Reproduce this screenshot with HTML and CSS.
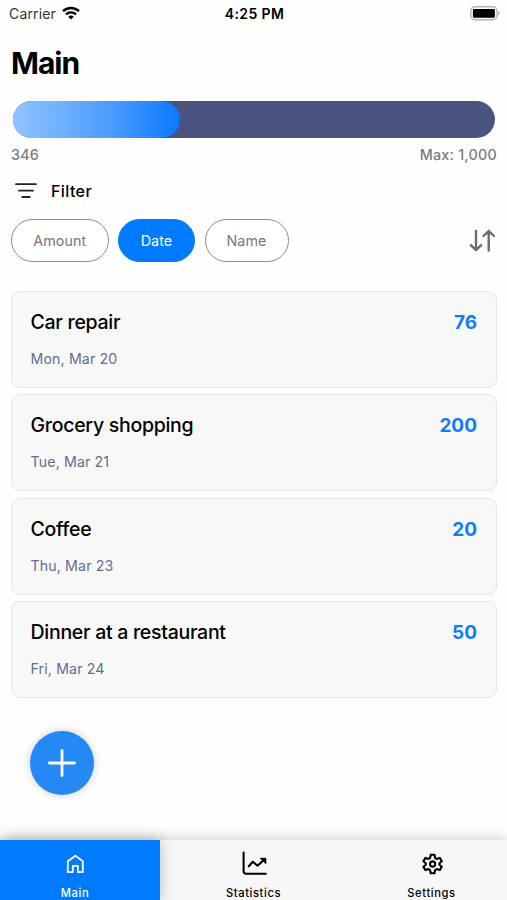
FILE: index.html
```html
<!DOCTYPE html>
<html lang="en">
<head>
  <meta charset="utf-8" />
  <meta name="viewport" content="width=device-width, initial-scale=1" />
  <title>Main</title>
  <link rel="stylesheet" href="styles.css">
</head>
<body>
  <div class="status-bar">
    <div class="carrier">
      <span class="carrier-name">Carrier</span>
      <svg width="18" height="14" viewBox="0 0 18 14" fill="none" stroke="#000" stroke-width="2.4">
        <path d="M1 5.2C5.4.9 12.6.9 17 5.2" />
        <path d="M4 8.4c2.8-2.7 7.2-2.7 10 0" />
        <path d="M9 13.6 6.2 10.7c1.5-1.5 4.1-1.5 5.6 0Z" fill="#000" stroke="none" />
      </svg>
    </div>
    <span class="clock">4:25 PM</span>
    <div class="battery">
      <svg width="31" height="15" viewBox="0 0 31 15">
        <rect x="1.8" y=".8" width="26.2" height="13" rx="4" fill="#fff" stroke="#b5b5b5" stroke-width="1.4" />
        <rect x="3.9" y="2.9" width="22" height="8.8" rx="1" />
        <path d="M29 5.2c2 .6 2 3.6 0 4.2Z" fill="#b5b5b5" />
      </svg>
    </div>
  </div>

  <main>
    <h1>Main</h1>

    <div class="progress">
      <div class="progress-fill" style="width: 34.6%"></div>
    </div>
    <div class="progress-labels">
      <span>346</span>
      <span>Max: 1,000</span>
    </div>

    <div class="filter-title">
      <svg width="22" height="16" viewBox="0 0 22 16" fill="none" stroke="#222" stroke-width="1.8" stroke-linecap="round">
        <path d="M1 1.2h20M4 7.7h14M7.3 14h7.4" />
      </svg>
      <span>Filter</span>
    </div>

    <div class="filters">
      <button class="chip chip-amount">Amount</button>
      <button class="chip chip-date active">Date</button>
      <button class="chip chip-name">Name</button>
      <svg class="sort" width="27" height="24" viewBox="0 0 27 24" fill="none" stroke="#686c78" stroke-width="2.4" stroke-linecap="round" stroke-linejoin="round">
        <path d="M7 2v19M1.8 16.2 7 21.2l5.2-5M19.7 21.5V2M14.5 7l5.2-5 5.2 5" />
      </svg>
    </div>

    <div class="expenses">
      <div class="card">
        <div class="card-row">
          <span class="name">Car repair</span>
          <span class="amount">76</span>
        </div>
        <div class="date">Mon, Mar 20</div>
      </div>
      <div class="card">
        <div class="card-row">
          <span class="name">Grocery shopping</span>
          <span class="amount">200</span>
        </div>
        <div class="date">Tue, Mar 21</div>
      </div>
      <div class="card">
        <div class="card-row">
          <span class="name">Coffee</span>
          <span class="amount">20</span>
        </div>
        <div class="date">Thu, Mar 23</div>
      </div>
      <div class="card">
        <div class="card-row">
          <span class="name">Dinner at a restaurant</span>
          <span class="amount">50</span>
        </div>
        <div class="date">Fri, Mar 24</div>
      </div>
    </div>

    <button class="add">
      <svg width="28" height="28" viewBox="0 0 28 28" fill="none" stroke="#fff" stroke-width="2.8" stroke-linecap="round">
        <path d="M14 1.4v25.2M1.4 14h25.2" />
      </svg>
    </button>
  </main>

  <nav>
    <a class="tab tab-main active">
      <svg width="26" height="26" viewBox="0 0 26 26" fill="none" stroke="#fff" stroke-width="1.8" stroke-linejoin="round">
        <path d="M5.8 10.2 13.4 4.7l7.4 5.5v10.9h-4.9v-6.3h-5.1v6.3h-5Z" />
      </svg>
      <span>Main</span>
    </a>
    <a class="tab tab-statistics">
      <svg width="26" height="26" viewBox="0 0 26 26" fill="none" stroke="#000" stroke-width="2.1" stroke-linecap="round" stroke-linejoin="round">
        <path d="M2.6 1.6v18.8a2.4 2.4 0 0 0 2.4 2.4h19.8M7.8 15.3l4-4.6 4.7 4 6.6-6" />
        <path d="M19.8 7.3h5v5Z" fill="#000" stroke-width="1" />
      </svg>
      <span>Statistics</span>
    </a>
    <a class="tab tab-settings">
      <svg width="26" height="26" viewBox="0 0 26 26" fill="none" stroke="#000" stroke-width="2.1" stroke-linejoin="round">
        <path d="M11.7 3.8h3.8l.5 2.7q.1.6.7.9l.5.3q.5.3 1.1.1l2.6-.9 1.9 3.3-2.1 1.8q-.4.4-.4 1t.4 1l2.1 1.8-1.9 3.3-2.6-.9q-.6-.2-1.1.1l-.5.3q-.6.3-.7.9l-.5 2.7h-3.8l-.5-2.7q-.1-.6-.7-.9l-.5-.3q-.5-.3-1.1-.1l-2.6.9-1.9-3.3 2.1-1.8q.4-.4.4-1t-.4-1l-2.1-1.8 1.9-3.3 2.6.9q.6.2 1.1-.1l.5-.3q.6-.3.7-.9Z" />
        <circle cx="13.6" cy="13" r="2.6" />
      </svg>
      <span>Settings</span>
    </a>
  </nav>
</body>
</html>
```
FILE: styles.css
```css
* {
  box-sizing: border-box;
  margin: 0;
  padding: 0;
}

body {
  display: flex;
  flex-direction: column;
  height: 100vh;
  overflow: hidden;
  background: #fefefe;
  color: #000;
  font-family: Inter, 'Liberation Sans', sans-serif;
}

button {
  border: none;
  font: inherit;
}

svg {
  display: block;
  flex: none;
}

.status-bar {
  display: flex;
  align-items: center;
  height: 28px;
  padding: 0 7px 2px 9px;
  font-size: 14px;

  > div {
    flex: 1;
    display: flex;
    align-items: center;
  }
}

.carrier {
  gap: 6px;
  color: #333;
}

.carrier-name {
  letter-spacing: .15px;
}

.clock {
  font-weight: 600;
  letter-spacing: .4px;
}

.battery {
  justify-content: flex-end;
}

main {
  flex: 1;
  padding: 0 10px 0 11px;
}

h1 {
  margin-top: 16px;
  font-size: 30px;
  line-height: 38px;
  letter-spacing: -1px;
}

.progress {
  height: 37px;
  margin: 19px 2px 0 2px;
  border-radius: 19px;
  background: #4a557f;
}

.progress-fill {
  height: 100%;
  border-radius: 19px;
  background: linear-gradient(to right, #90c4ff, #4b9aff 60%, #0a79ff);
}

.progress-labels {
  display: flex;
  justify-content: space-between;
  margin-top: 7px;
  color: #777c85;
  font-size: 14.3px;
  font-weight: 500;
  line-height: 20px;
  letter-spacing: .25px;
}

.filter-title {
  display: flex;
  align-items: center;
  gap: 14px;
  height: 24px;
  margin-top: 14px;
  padding-left: 4px;
  font-size: 16px;
  font-weight: 500;
  letter-spacing: .4px;
}

.filters {
  display: flex;
  align-items: center;
  gap: 9.5px;
  height: 43px;
  margin-top: 16px;
}

.chip {
  height: 43px;
  border: 1.5px solid #8c8c90;
  border-radius: 22px;
  background: #fff;
  color: #77777b;
  font-size: 14.3px;
  letter-spacing: .1px;

  &.active {
    border-color: #007aff;
    background: #007aff;
    color: #fff;
  }
}

.chip-amount {
  width: 97.5px;
}

.chip-date {
  width: 77px;
}

.chip-name {
  width: 84px;
}

.sort {
  margin-left: auto;
  margin-right: 1px;
}

.expenses {
  display: flex;
  flex-direction: column;
  gap: 6.4px;
  margin-top: 29px;
}

.card {
  height: 97px;
  padding: 18px 19px 0 18.5px;
  border: 1px solid #e6e6e8;
  border-radius: 9px;
  background: #f8f8f8;
}

.card-row {
  display: flex;
  justify-content: space-between;
  font-size: 19.5px;
  line-height: 25px;
}

.name {
  font-weight: 500;
  letter-spacing: -.28px;
}

.amount {
  color: #0f7df5;
  font-size: 19px;
  font-weight: 700;
}

.date {
  margin-top: 14px;
  color: #666b94;
  font-size: 14.2px;
  line-height: 20px;
  letter-spacing: .12px;
}

.add {
  display: flex;
  align-items: center;
  justify-content: center;
  width: 64px;
  height: 64px;
  margin: 33px 0 0 19px;
  border-radius: 50%;
  background: #2589f5;
  box-shadow: 0 0 8px rgb(0 0 0 / .2);
}

nav {
  display: flex;
  flex: none;
  height: 60px;
  background: #f7f7f7;
  box-shadow: 0 0 14px rgb(0 0 0 / .22);
}

.tab {
  display: flex;
  flex-direction: column;
  align-items: center;
  gap: 8px;
  width: 160px;
  padding-top: 11px;
  font-size: 11.2px;
  font-weight: 500;
  line-height: 16px;
  letter-spacing: .6px;

  &.active {
    background: #007aff;
    box-shadow: 0 0 14px rgb(0 0 0 / .25);
    color: #fff;
  }
}

.tab-main {
  padding-right: 10px;
}

.tab-statistics {
  flex: 1;
}

.tab-settings {
  padding-left: 9px;
}
```
